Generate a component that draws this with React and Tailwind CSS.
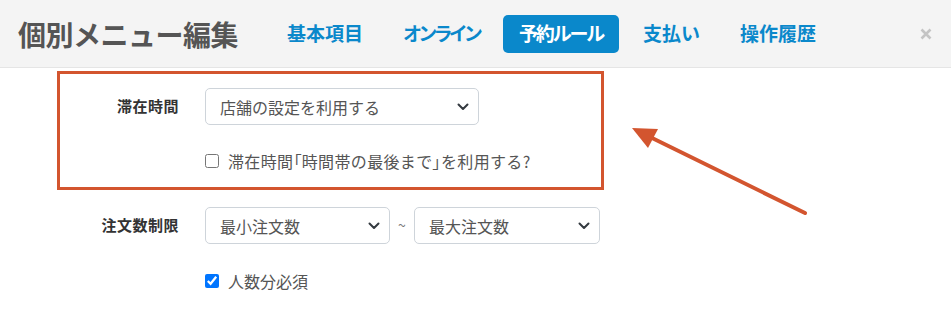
const TABS = [
  { label: '基本項目', track: 'tracking-normal' },
  { label: 'オンライン', track: 'tracking-[-3.8px]' },
  { label: '予約ルール', track: 'tracking-[-2.2px]', active: true },
  { label: '支払い', track: 'tracking-normal' },
  { label: '操作履歴', track: 'tracking-normal' },
]

const FONT = { fontFamily: '"Noto Sans CJK JP", "Noto Sans", sans-serif' }

function Chevron() {
  return (
    <svg
      className="pointer-events-none absolute right-[10px] top-1/2 -translate-y-1/2"
      width="12"
      height="8"
      viewBox="0 0 12 8"
    >
      <path d="M1.5 1.5 6 6l4.5-4.5" fill="none" stroke="#343a40" strokeWidth="2" strokeLinecap="round" strokeLinejoin="round" />
    </svg>
  )
}

function Select({ value, width }) {
  return (
    <div className="relative" style={{ width }}>
      <div className="flex h-[37px] w-full items-center rounded-[5px] border border-[#ced4da] bg-white pl-[14px] text-[16px] text-[#555]">
        {value}
      </div>
      <Chevron />
    </div>
  )
}

function Row({ label, children, className = '' }) {
  return (
    <div className={'flex items-center ' + className}>
      <div className="w-[119px] text-right text-[15px] font-bold tracking-[0.5px] text-[#333]">{label}</div>
      <div className="ml-[26px] flex items-center">{children}</div>
    </div>
  )
}

function Check({ checked, children, className = '' }) {
  return (
    <label className={'flex items-center gap-[9px] text-[16px] text-[#555] ' + className}>
      <input type="checkbox" defaultChecked={checked} className="m-0 h-[14px] w-[14px]" />
      <span>{children}</span>
    </label>
  )
}

export default function App() {
  return (
    <div className="relative h-[315px] w-[951px] overflow-hidden bg-white" style={FONT}>
      {/* Header */}
      <header className="flex h-[68px] items-center border-b border-[#e5e5e5] bg-[#f4f4f4] pl-[18px] pr-[19px]">
        <h1 className="text-[28px] font-bold tracking-[-0.5px] text-[#555]">個別メニュー編集</h1>
        <nav className="ml-[33px] flex items-center gap-2">
          {TABS.map((t) => (
            <div
              key={t.label}
              className={
                (t.active
                  ? 'flex h-[38px] items-center rounded-[5px] bg-[#0a88cb] px-4 text-[19px] font-bold text-white '
                  : 'flex h-[38px] items-center rounded-[5px] px-4 text-[19px] font-bold text-[#0a88cb] ') + t.track
              }
            >
              {t.label}
            </div>
          ))}
        </nav>
        <div className="ml-auto">
          <svg width="12" height="12" viewBox="0 0 12 12">
            <path d="M1.5 1.5l9 9M10.5 1.5l-9 9" stroke="#c4c4c4" strokeWidth="2.6" />
          </svg>
        </div>
      </header>

      {/* Form */}
      <div className="ml-[57px] mt-[3px] w-[547px]">
        <div className="border-[3px] border-[#d3552f] pb-[8px] pt-[14px]">
          <Row label="滞在時間">
            <Select value="店舗の設定を利用する" width={274} />
          </Row>
          <Row label="" className="mt-[18px] h-[36px]">
            <Check className="tracking-[0.35px]">
              滞在時間<span className="[font-feature-settings:'palt']">「</span>時間帯の最後まで
              <span className="[font-feature-settings:'palt']">」</span>を利用する?
            </Check>
          </Row>
        </div>
        <div className="px-[3px]">
          <Row label="注文数制限" className="mt-[17px]">
            <Select value="最小注文数" width={185} />
            <span className="mx-[3px] w-[18px] text-center text-[14px] text-[#777]">~</span>
            <Select value="最大注文数" width={186} />
          </Row>
          <Row label="" className="mt-[19px] h-[36px]">
            <Check checked>人数分必須</Check>
          </Row>
        </div>
      </div>

      {/* Annotation arrow */}
      <svg className="pointer-events-none absolute left-0 top-0" width="951" height="315">
        <line x1="805" y1="213" x2="648" y2="136" stroke="#d3552f" strokeWidth="4" strokeLinecap="round" />
        <polygon points="632,128 658,129 648,148" fill="#d3552f" />
      </svg>
    </div>
  )
}
